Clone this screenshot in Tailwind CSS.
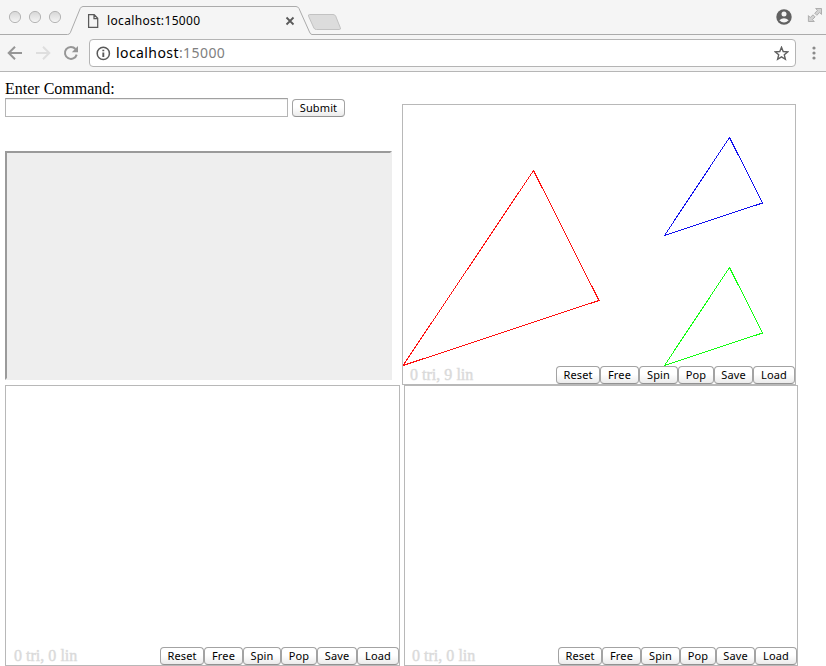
<!DOCTYPE html>
<html lang="en">
<head>
<meta charset="utf-8">
<title>localhost:15000</title>
<script src="https://cdn.jsdelivr.net/npm/@tailwindcss/browser@4"></script>
</head>
<body class="w-[826px] h-[666px] overflow-hidden bg-white text-black font-['Noto_Sans','Open_Sans',sans-serif]">
<header class="h-[72px] bg-[#f5f5f5] border-b border-[#b6b6b6]">
  <div class="relative h-[35px]">
    <svg class="absolute inset-0" width="826" height="35" viewBox="0 0 826 35" fill="none">
      <defs><linearGradient id="lamp" x1="0" y1="0" x2="0" y2="1"><stop offset="0" stop-color="#d6d6d6"/><stop offset="1" stop-color="#f6f6f6"/></linearGradient></defs>
      <g fill="url(#lamp)" stroke="#b5b5b5"><circle cx="15" cy="17" r="5.6"/><circle cx="35" cy="17" r="5.6"/><circle cx="55" cy="17" r="5.6"/></g>
      <path d="M0 34.5H67.5Q69.5 34.5 70.3 32.7L80.2 8.5Q81.2 6.5 83 6.5H296Q298 6.5 299 8.5L309.5 32Q310.5 34.5 312 34.5H826" stroke="#ababab"/>
      <path d="M88.6 14.7H94.2L97.7 18.3V27.3H88.6Z M94 14.9V18.6H97.5" stroke="#5a5a5a" stroke-width="1.25"/>
      <path d="M286.5 17.5L293.5 24.5M293.5 17.5L286.5 24.5" stroke="#5a5a5a" stroke-width="1.8"/>
      <path d="M309.6 14.5H333Q335 14.5 335.7 16.2L340.3 27.7Q341 29.5 339.4 29.5H316.5Q314.6 29.5 313.9 28L308.6 16.3Q307.9 14.5 309.6 14.5Z" fill="#dcdcdc" stroke="#c2c2c2"/>
      <circle cx="784" cy="17" r="7.7" fill="#616161"/>
      <circle cx="784" cy="14.1" r="2.5" fill="#f5f5f5"/><path d="M779.3 20.2Q784 16.3 788.7 20.2Q784 25 779.3 20.2Z" fill="#f5f5f5"/>
      <g fill="#d2d2d2" stroke="#a8a8a8" stroke-width=".9"><path d="M815.6 8.5H821.5V14.4L819.6 12.5L816.8 15.3L814.7 13.2L817.5 10.4L815.6 8.5Z"/><path d="M808.4 21.5H814.3L812.4 19.6L815.1 16.9L813 14.8L810.3 17.5L808.4 15.6Z"/></g>
    </svg>
    <span class="absolute left-[107px] top-[12px] text-[12px] leading-[17px] tracking-[0.35px]">localhost:15000</span>
  </div>
  <div class="flex h-[36px] pt-1">
    <svg class="shrink-0" width="89" height="28" viewBox="0 39 89 28" fill="none">
      <path d="M22 53H9M15 46.7L8.7 53L15 59.3" stroke="#969696" stroke-width="2"/>
      <path d="M36 53H49M43 46.7L49.3 53L43 59.3" stroke="#dedede" stroke-width="2"/>
      <path d="M75.5 49A6 6 0 1 0 76.7 54.6" stroke="#969696" stroke-width="2"/><path d="M78 46V52.2H71.8Z" fill="#969696"/>
    </svg>
    <div class="flex w-[707px] h-[28px] items-center rounded-[4px] border border-[#b4b4b4] bg-white pl-[6px] pr-[6px]">
      <svg width="15" height="15" viewBox="0 0 15 15" fill="none"><circle cx="7.3" cy="7.4" r="6.1" stroke="#5a5a5a" stroke-width="1.5"/><path d="M7.3 6.5V11M7.3 3.8V5.3" stroke="#5a5a5a" stroke-width="1.9"/></svg>
      <span class="ml-[5px] text-[14px] leading-[20px] tracking-[0.42px]">localhost<span class="text-[#808080]">:15000</span></span>
      <svg class="ml-auto" width="15" height="15" viewBox="0 0 15 15"><path d="M7.5 1.3L9.2 5.5L13.8 5.9L10.3 8.8L11.4 13.3L7.5 10.9L3.6 13.3L4.7 8.8L1.2 5.9L5.8 5.5Z" fill="none" stroke="#606060" stroke-width="1.4"/></svg>
    </div>
    <svg width="30" height="28" viewBox="796 39 30 28" fill="#8a8a8a"><circle cx="814" cy="48" r="1.6"/><circle cx="814" cy="53" r="1.6"/><circle cx="814" cy="58" r="1.6"/></svg>
  </div>
</header>
<main>
  <div class="flex h-[313px] pl-[5px]">
    <section class="w-[397px] pt-[8px]">
      <label for="cmd" class="block h-[18px] text-[16px] leading-[18px] font-['Liberation_Serif',serif]">Enter Command:</label>
      <div class="flex h-[19px]">
        <input id="cmd" class="h-[19px] w-[283px] border border-[#b5b5b5] border-t-[#a0a0a0] bg-white shadow-[inset_0_1px_0_#ececec]">
        <button class="ml-[4px] mt-[1px] h-[18px] w-[53px] rounded-[4px] border border-[#a3a3a3] border-b-[#929292] bg-linear-to-b from-white from-45% to-[#ebebeb] text-[11px] leading-[14px] tracking-[0.12px]">Submit</button>
      </div>
      <div class="mt-[34px] h-[229px] w-[387px] border-2 border-t-[#9a9a9a] border-l-[#9a9a9a] border-r-[#eeeeee] border-b-[#eeeeee] bg-[#eeeeee]"></div>
    </section>
    <section class="mt-[32px] flex h-[281px] w-[394px] flex-col border border-[#b8b8b8]">
      <svg class="block shrink-0" width="392" height="261" viewBox="403 105 392 261" fill="none" stroke-width="1" shape-rendering="crispEdges">
        <path d="M403 365.5L533.5 170.5L599 300.5Z" stroke="#f11"/>
        <path d="M664.5 235.5L729.5 137.5L762.5 203Z" stroke="#11e"/>
        <path d="M664.5 365.5L729.5 267.5L762.5 333Z" stroke="#1f1"/>
      </svg>
      <div class="flex h-[18px] pl-[7px] text-[11px] leading-[14px] tracking-[0.12px]">
        <span class="mr-auto text-[16px] leading-[18px] font-['Liberation_Serif',serif] text-[#dadada] tracking-[0.02px] [-webkit-text-stroke:0.4px_#dadada]">0 tri, 9 lin</span>
        <button class="h-[18px] w-[44px] rounded-[4px] border border-[#a3a3a3] border-b-[#929292] bg-linear-to-b from-white from-45% to-[#ebebeb]">Reset</button>
        <button class="h-[18px] w-[39px] rounded-[4px] border border-[#a3a3a3] border-b-[#929292] bg-linear-to-b from-white from-45% to-[#ebebeb]">Free</button>
        <button class="h-[18px] w-[39px] rounded-[4px] border border-[#a3a3a3] border-b-[#929292] bg-linear-to-b from-white from-45% to-[#ebebeb]">Spin</button>
        <button class="h-[18px] w-[36px] rounded-[4px] border border-[#a3a3a3] border-b-[#929292] bg-linear-to-b from-white from-45% to-[#ebebeb]">Pop</button>
        <button class="h-[18px] w-[39px] rounded-[4px] border border-[#a3a3a3] border-b-[#929292] bg-linear-to-b from-white from-45% to-[#ebebeb]">Save</button>
        <button class="h-[18px] w-[42px] rounded-[4px] border border-[#a3a3a3] border-b-[#929292] bg-linear-to-b from-white from-45% to-[#ebebeb]">Load</button>
      </div>
    </section>
  </div>
  <div class="flex gap-[4px] pl-[5px]">
    <section class="flex h-[281px] w-[395px] items-end border border-[#b8b8b8] pl-[8px] text-[11px] leading-[14px] tracking-[0.12px]">
      <span class="mr-auto text-[16px] leading-[18px] font-['Liberation_Serif',serif] text-[#dadada] tracking-[0.02px] [-webkit-text-stroke:0.4px_#dadada]">0 tri, 0 lin</span>
      <button class="h-[18px] w-[44px] rounded-[4px] border border-[#a3a3a3] border-b-[#929292] bg-linear-to-b from-white from-45% to-[#ebebeb]">Reset</button>
      <button class="h-[18px] w-[39px] rounded-[4px] border border-[#a3a3a3] border-b-[#929292] bg-linear-to-b from-white from-45% to-[#ebebeb]">Free</button>
      <button class="h-[18px] w-[38px] rounded-[4px] border border-[#a3a3a3] border-b-[#929292] bg-linear-to-b from-white from-45% to-[#ebebeb]">Spin</button>
      <button class="h-[18px] w-[36px] rounded-[4px] border border-[#a3a3a3] border-b-[#929292] bg-linear-to-b from-white from-45% to-[#ebebeb]">Pop</button>
      <button class="h-[18px] w-[40px] rounded-[4px] border border-[#a3a3a3] border-b-[#929292] bg-linear-to-b from-white from-45% to-[#ebebeb]">Save</button>
      <button class="h-[18px] w-[42px] rounded-[4px] border border-[#a3a3a3] border-b-[#929292] bg-linear-to-b from-white from-45% to-[#ebebeb]">Load</button>
    </section>
    <section class="flex h-[281px] w-[394px] items-end border border-[#b8b8b8] pl-[7px] text-[11px] leading-[14px] tracking-[0.12px]">
      <span class="mr-auto text-[16px] leading-[18px] font-['Liberation_Serif',serif] text-[#dadada] tracking-[0.02px] [-webkit-text-stroke:0.4px_#dadada]">0 tri, 0 lin</span>
      <button class="h-[18px] w-[44px] rounded-[4px] border border-[#a3a3a3] border-b-[#929292] bg-linear-to-b from-white from-45% to-[#ebebeb]">Reset</button>
      <button class="h-[18px] w-[39px] rounded-[4px] border border-[#a3a3a3] border-b-[#929292] bg-linear-to-b from-white from-45% to-[#ebebeb]">Free</button>
      <button class="h-[18px] w-[39px] rounded-[4px] border border-[#a3a3a3] border-b-[#929292] bg-linear-to-b from-white from-45% to-[#ebebeb]">Spin</button>
      <button class="h-[18px] w-[36px] rounded-[4px] border border-[#a3a3a3] border-b-[#929292] bg-linear-to-b from-white from-45% to-[#ebebeb]">Pop</button>
      <button class="h-[18px] w-[39px] rounded-[4px] border border-[#a3a3a3] border-b-[#929292] bg-linear-to-b from-white from-45% to-[#ebebeb]">Save</button>
      <button class="h-[18px] w-[42px] rounded-[4px] border border-[#a3a3a3] border-b-[#929292] bg-linear-to-b from-white from-45% to-[#ebebeb]">Load</button>
    </section>
  </div>
</main>
</body>
</html>
